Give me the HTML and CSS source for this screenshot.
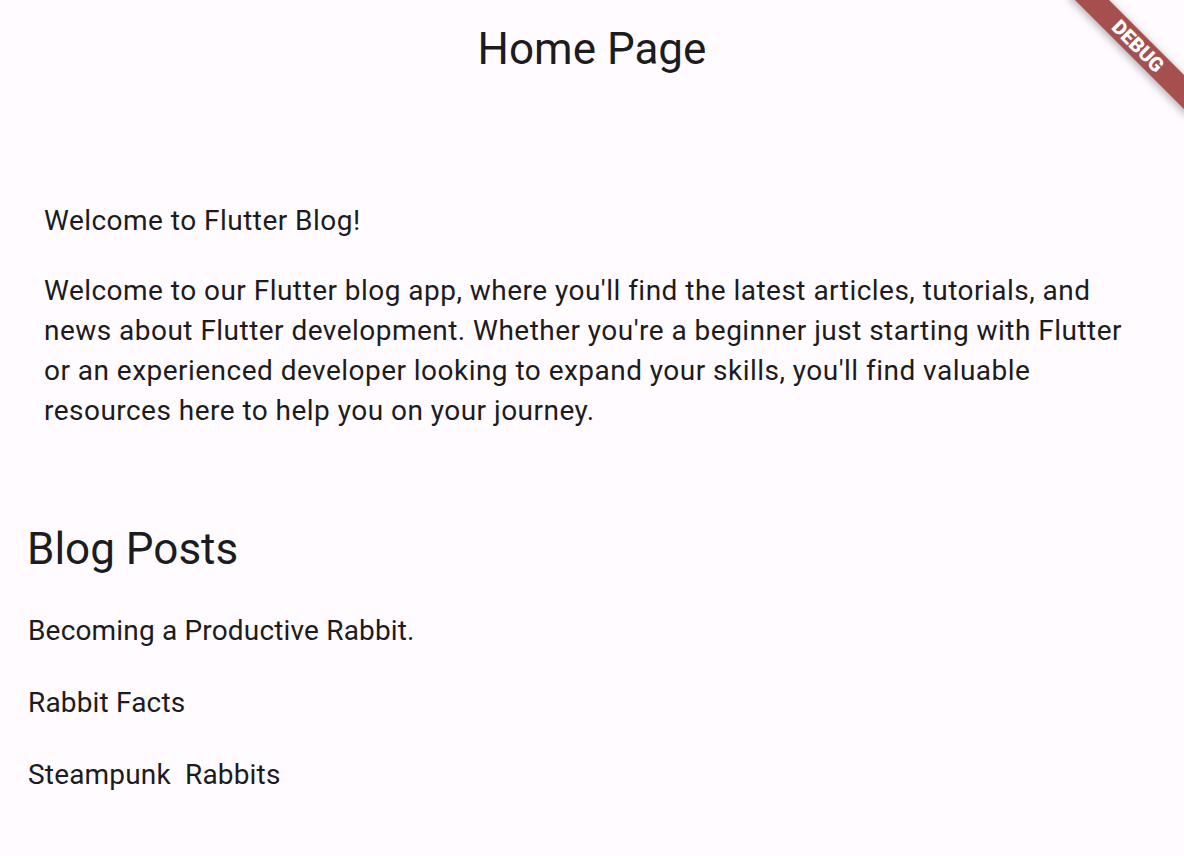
FILE: index.html
```html
<!DOCTYPE html>
<html lang="en">
<head>
<meta charset="utf-8">
<title>Home Page</title>
<link rel="stylesheet" href="styles.css">
</head>
<body>
<div class="app">
  <header class="app-bar">
    <h1 class="app-title">Home Page</h1>
  </header>
  <main class="content">
    <section class="intro">
      <p class="intro-title">Welcome to Flutter Blog!</p>
      <p class="intro-text">Welcome to our Flutter blog app, where you'll find the latest articles, tutorials, and news about Flutter development. Whether you're a beginner just starting with Flutter or an experienced developer looking to expand your skills, you'll find valuable resources here to help you on your journey.</p>
    </section>
    <section class="posts">
      <h2 class="posts-title">Blog Posts</h2>
      <ul class="post-list">
        <li class="post-item">Becoming a Productive Rabbit.</li>
        <li class="post-item">Rabbit Facts</li>
        <li class="post-item">Steampunk&nbsp; Rabbits</li>
      </ul>
    </section>
  </main>
  <div class="debug-banner"><span class="debug-text">DEBUG</span></div>
</div>
</body>
</html>
```
FILE: styles.css
```css
html, body {
  margin: 0;
  padding: 0;
  height: 100%;
}
body {
  background: #fffbfe;
  color: #1c1b1f;
  font-family: Roboto, "Noto Sans", "Liberation Sans", sans-serif;
  overflow: hidden;
}
.app {
  position: relative;
  height: 856px;
  overflow: hidden;
}
.app-bar {
  display: flex;
  justify-content: center;
  padding-top: 23px;
}
.app-title {
  margin: 0;
  font-size: 44px;
  line-height: 52px;
  font-weight: 400;
}
.content {
  display: flex;
  flex-direction: column;
}
.intro {
  padding: 126px 44px 0 44px;
}
.intro-title {
  margin: 0;
  font-size: 28px;
  line-height: 40px;
  letter-spacing: 0.47px;
}
.intro-text {
  margin: 30px 0 0;
  font-size: 28px;
  line-height: 40px;
  letter-spacing: 0.47px;
}
.posts {
  padding: 92px 26px 0 27px;
}
.posts-title {
  margin: 0;
  font-size: 44px;
  line-height: 52px;
  font-weight: 400;
}
.post-list {
  list-style: none;
  margin: 36px 0 0;
  padding: 0 0 0 1px;
  display: flex;
  flex-direction: column;
  gap: 32px;
}
.post-item {
  font-size: 28px;
  line-height: 40px;
  letter-spacing: 0.17px;
}
.debug-banner {
  position: absolute;
  left: 1138px;
  top: 46px;
  width: 170px;
  height: 24px;
  transform: translate(-50%, -50%) rotate(45deg);
  background: #a64f4f;
  box-shadow: 0 2px 10px rgba(0, 0, 0, 0.35);
  display: flex;
  align-items: center;
  justify-content: center;
}
.debug-text {
  color: #ffffff;
  font-family: Roboto, "Liberation Sans", sans-serif;
  font-weight: 900;
  font-size: 20px;
  line-height: 1;
}
```
